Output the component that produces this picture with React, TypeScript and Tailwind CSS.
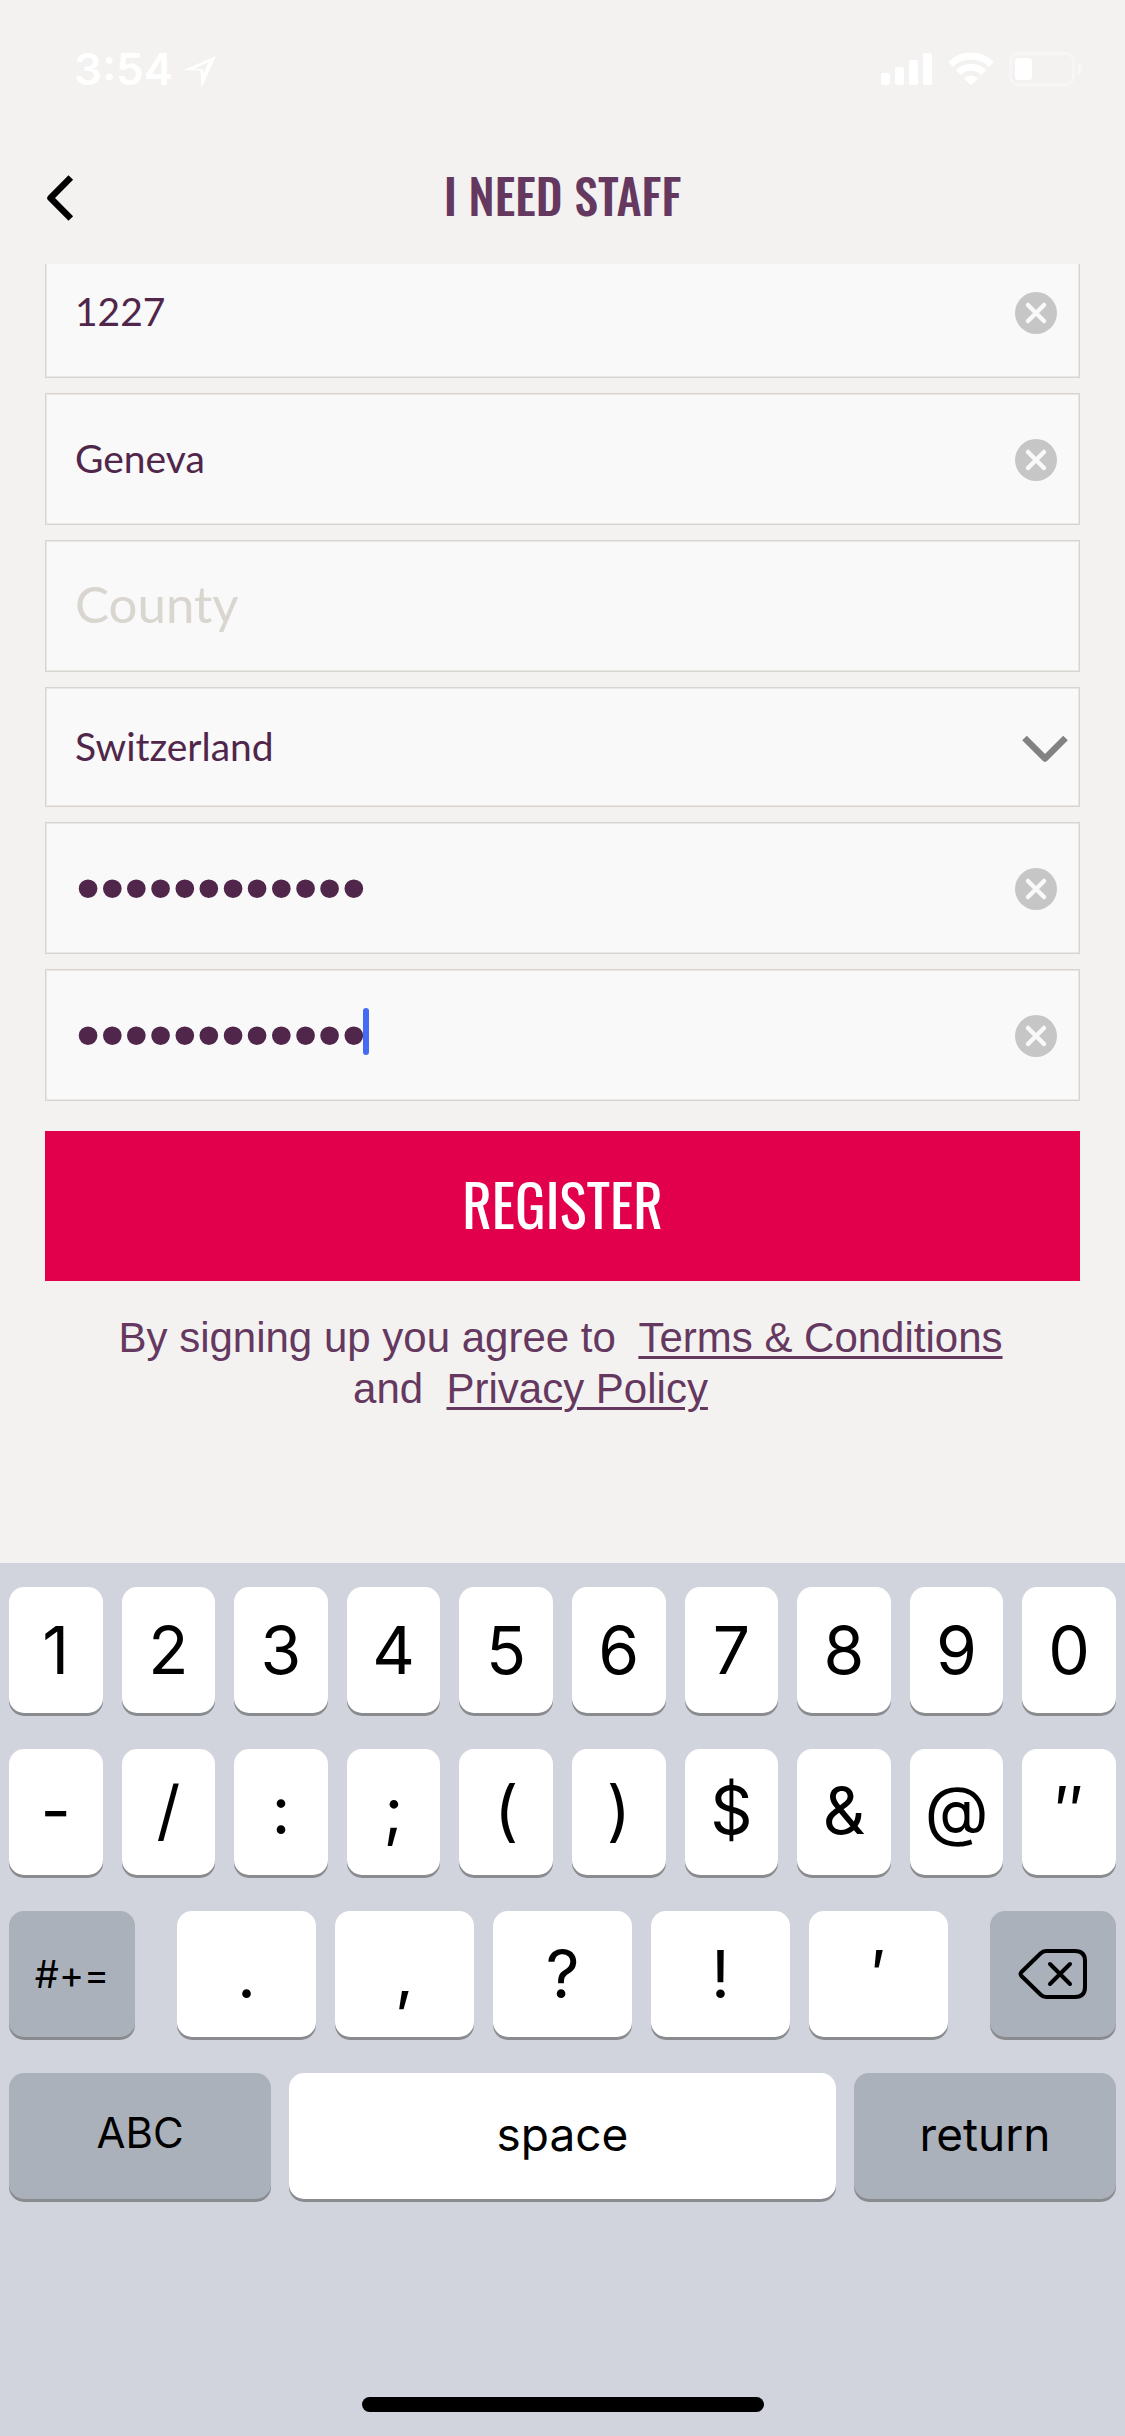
import { useState } from "react";

const INTER = "font-['Inter','Liberation_Sans',sans-serif]";
const CONDENSED = "font-['Oswald','Liberation_Sans_Narrow','Liberation_Sans',sans-serif]";

function StatusBar() {
  return (
    <div className="flex h-[132px] items-start justify-between pt-[46px] pr-[42px] pl-[74px] text-white">
      <div className="flex items-center gap-[11px]">
        <span className={`${INTER} text-[44px] leading-[46px] font-semibold`}>3:54</span>
        <svg width="32" height="38" viewBox="0 -6 32 38" aria-hidden="true">
          <path
            fillRule="evenodd"
            fill="currentColor"
            d="M32 0 L17.5 32 L16.5 14.5 L0 14 Z M24 6.5 L9.5 12.8 L19 13 L19.7 18.5 Z"
          />
        </svg>
      </div>
      <div className="flex h-[46px] items-center gap-[15px]">
        <svg width="52" height="34" viewBox="0 0 52 34" fill="currentColor" aria-hidden="true">
          <rect x="0" y="21" width="9" height="12" rx="2.5" />
          <rect x="14" y="15" width="9" height="18" rx="2.5" />
          <rect x="28" y="8" width="9" height="25" rx="2.5" />
          <rect x="42" y="1" width="9" height="32" rx="2.5" />
        </svg>
        <svg width="46" height="34" viewBox="0 0 46 34" aria-hidden="true">
          <g fill="none" stroke="currentColor" strokeWidth="7">
            <path d="M2.6 12.4 A29 29 0 0 1 43.4 12.4" />
            <path d="M10.4 20.4 A18 18 0 0 1 35.6 20.4" />
          </g>
          <path fill="currentColor" d="M23 33.5 L16 26.5 Q23 20.5 30 26.5 Z" />
        </svg>
        <svg width="74" height="34" viewBox="0 0 74 34" aria-hidden="true">
          <rect x="1.5" y="1.5" width="63" height="31" rx="7.5" fill="none" stroke="white" strokeWidth="3" opacity="0.35" />
          <rect x="6" y="6" width="17" height="22" rx="3.5" fill="white" />
          <path d="M69 11 Q73.500 13.500 73.500 17 Q73.500 20.500 69 23 Z" fill="white" opacity="0.4" />
        </svg>
      </div>
    </div>
  );
}

function Header() {
  return (
    <header className="grid h-[132px] grid-cols-[1fr_auto_1fr] items-center px-[45px]">
      <button type="button" aria-label="Back" className="justify-self-start">
        <svg width="30" height="46" viewBox="0 0 30 46" fill="none" stroke="black" strokeWidth="6.500" strokeLinejoin="round" aria-hidden="true">
          <path d="M25.800 2.500 L5.500 23 L25.800 43.500" />
        </svg>
      </button>
      <h1 className={`${CONDENSED} pb-1.5 text-[48px] leading-none font-medium text-[#653860]`}>I NEED STAFF</h1>
    </header>
  );
}

const BOX =
  "flex w-full items-center border border-[#d8d4d0] bg-[#f9f9f9] shadow-[inset_0_0_0_1px_#e9e7e4]";

type FieldProps = {
  id: string;
  label: string;
  value: string;
  onChange: (v: string) => void;
  password?: boolean;
  caret?: boolean;
};

function Field({ id, label, value, onChange, password, caret }: FieldProps) {
  return (
    <div className={`${BOX} relative h-[132px] pr-[22px]`}>
      <input
        id={id}
        type={password ? "password" : "text"}
        autoComplete="off"
        aria-label={label}
        placeholder={label}
        value={value}
        onChange={(e) => onChange(e.target.value)}
        className={
          password
            ? "h-full min-w-0 flex-1 bg-transparent pb-0.5 pl-[30px] font-['Liberation_Sans',sans-serif] text-[69px] text-[#50264b] outline-none"
            : "h-full min-w-0 flex-1 bg-transparent pb-0.5 pl-[29px] font-['Lato',sans-serif] text-[39px] text-[#50264b] outline-none placeholder:text-[#d9d5cf] placeholder-shown:pb-1.5 placeholder-shown:text-[51px]"
        }
      />
      {caret && <span className="absolute top-[38px] left-[317px] h-[47px] w-[6px] rounded-full bg-[#436cf2]" />}
      {value && (
        <button type="button" aria-label={`Clear ${label}`} onClick={() => onChange("")} className="pt-0.5">
          <svg className="block" width="42" height="42" viewBox="0 0 42 42" aria-hidden="true">
            <circle cx="21" cy="21" r="21" fill="#c6c6c6" />
            <path d="M13 13 L29 29 M29 13 L13 29" stroke="#f9f9f9" strokeWidth="4.500" strokeLinecap="round" />
          </svg>
        </button>
      )}
    </div>
  );
}

function Form() {
  const [postcode, setPostcode] = useState("1227");
  const [city, setCity] = useState("Geneva");
  const [county, setCounty] = useState("");
  const [password, setPassword] = useState("password1234");
  const [confirm, setConfirm] = useState("password1234");
  return (
    <form className="-mt-[18px] flex flex-col gap-[15px] px-[45px]" onSubmit={(e) => e.preventDefault()}>
      <Field id="postcode" label="Postcode" value={postcode} onChange={setPostcode} />
      <Field id="city" label="City" value={city} onChange={setCity} />
      <Field id="county" label="County" value={county} onChange={setCounty} />
      <div className={`${BOX} relative h-[120px]`}>
        <select
          id="country"
          aria-label="Country"
          defaultValue="Switzerland"
          className="h-full w-full appearance-none bg-transparent pb-0.5 pl-[29px] font-['Lato',sans-serif] text-[39px] text-[#50264b] outline-none"
        >
          <option>Switzerland</option>
          <option>United Kingdom</option>
        </select>
        <svg
          className="pointer-events-none absolute top-1/2 right-[11px] -translate-y-1/2"
          width="46"
          height="30"
          viewBox="0 0 46 30"
          fill="none"
          stroke="#828282"
          strokeWidth="6.500"
          strokeLinejoin="round"
          aria-hidden="true"
        >
          <path d="M2.500 6 L23 26.500 L43.500 6" />
        </svg>
      </div>
      <Field id="password" label="Password" value={password} onChange={setPassword} password />
      <Field id="confirm" label="Confirm password" value={confirm} onChange={setConfirm} password caret />
      <button type="submit" className={`${CONDENSED} mt-[15px] h-[150px] bg-[#e2004d] pb-1.5 text-[57px] leading-none text-white`}>
        REGISTER
      </button>
      <p className="mt-4 text-center font-['Liberation_Sans',sans-serif] text-[42px] leading-[51px] text-[#653860]">
        <span className="block pr-1">
          By signing up you agree to&nbsp;{" "}
          <a href="#terms" className="underline decoration-[3px] underline-offset-[4px]">
            Terms &amp; Conditions
          </a>
        </span>
        <span className="block pr-16">
          and&nbsp;{" "}
          <a href="#privacy" className="underline decoration-[3px] underline-offset-[4px]">
            Privacy Policy
          </a>
        </span>
      </p>
    </form>
  );
}

const KEY = "flex h-[126px] items-center justify-center rounded-[15px] text-black shadow-[0_3px_0_#898b8f]";
const LIGHT = `${KEY} min-w-0 flex-1 bg-white text-[66px] leading-none`;
const RAISED = `${LIGHT} pb-1`;
const DARK = `${KEY} shrink-0 bg-[#abb1bb] leading-none`;

function CharKeys({ chars, raised }: { chars: string[]; raised?: boolean }) {
  return (
    <>
      {chars.map((c) => (
        <button key={c} type="button" className={raised ? RAISED : LIGHT}>
          {c}
        </button>
      ))}
    </>
  );
}

function Keyboard() {
  return (
    <section aria-label="Keyboard" className={`${INTER} flex flex-col bg-[#d1d4dc] px-[9px] pt-6 pb-6`}>
      <div className="flex flex-col gap-9">
        <div className="flex gap-[19px]">
          <CharKeys chars={["1", "2", "3", "4", "5", "6", "7", "8", "9", "0"]} />
        </div>
        <div className="flex gap-[19px]">
          <CharKeys chars={["-", "/", ":", ";", "(", ")", "$", "&", "@", "″"]} raised />
        </div>
        <div className="flex gap-[42px]">
          <button type="button" className={`${DARK} w-[126px] text-[38px]`}>
            #+=
          </button>
          <div className="flex flex-1 gap-[19px]">
            <CharKeys chars={[".", ",", "?", "!", "′"]} />
          </div>
          <button type="button" aria-label="Delete" className={`${DARK} w-[126px]`}>
            <svg width="70" height="52" viewBox="0 0 70 52" fill="none" stroke="black" strokeWidth="4" strokeLinecap="round" strokeLinejoin="round" aria-hidden="true">
              <path d="M28 3 H57 Q67 3 67 13 V39 Q67 49 57 49 H28 Q25 49 22.500 46.500 L3.500 28 Q1.500 26 3.500 24 L22.500 5.500 Q25 3 28 3 Z" />
              <path d="M32 16 L52 36 M52 16 L32 36" />
            </svg>
          </button>
        </div>
        <div className="flex gap-[18px]">
          <button type="button" className={`${DARK} w-[262px] pb-1.5 text-[42px]`}>
            ABC
          </button>
          <button type="button" className={`${KEY} flex-1 bg-white pb-1 text-[46px] leading-none`}>
            space
          </button>
          <button type="button" className={`${DARK} w-[262px] pb-1 text-[46px]`}>
            return
          </button>
        </div>
      </div>
      <div className="mt-[198px] h-[15px] w-[402px] self-center rounded-full bg-black" />
    </section>
  );
}

export default function App() {
  return (
    <div className="flex min-h-screen flex-col bg-[#f3f2f0]">
      <StatusBar />
      <Header />
      <main className="flex-1 overflow-hidden">
        <Form />
      </main>
      <Keyboard />
    </div>
  );
}
